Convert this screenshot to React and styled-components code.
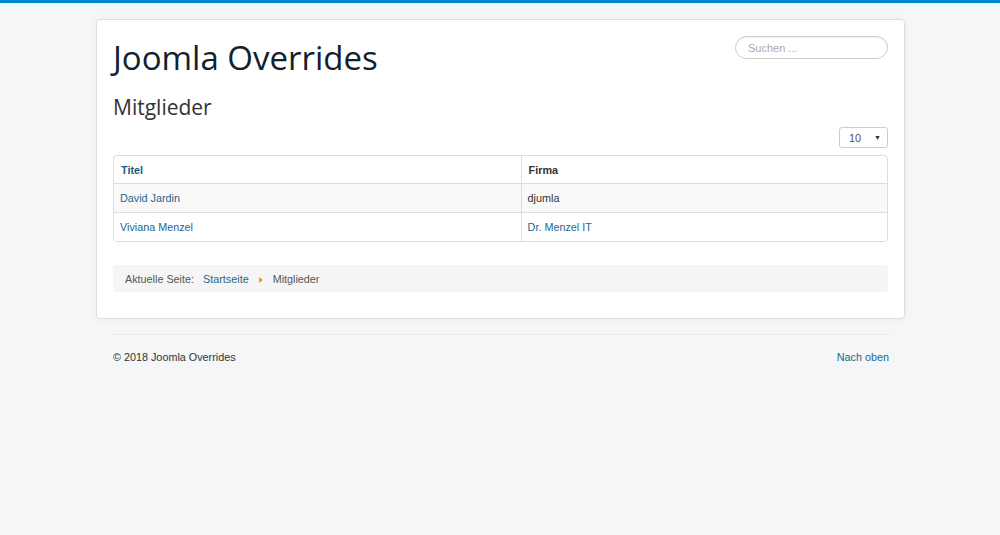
import React from 'react'
import styled, { createGlobalStyle } from 'styled-components'

const GlobalStyle = createGlobalStyle`
  html, body {
    margin: 0;
    padding: 0;
  }
  body {
    background: #f4f6f7;
    border-top: 3px solid #0088cc;
    font-family: "Liberation Sans", Arial, sans-serif;
    font-size: 10.8px;
    line-height: 18px;
    color: #333333;
    min-height: 532px;
  }
  a {
    color: #25668c;
    text-decoration: none;
  }
`

const Body = styled.div`
  padding: 16px 95px 0 96px;
`

const Card = styled.div`
  background: #ffffff;
  border: 1px solid #dddddd;
  border-radius: 4px;
  box-shadow: 0 0 6px rgba(0, 0, 0, 0.05);
  padding: 14px 16px 26px 16px;
`

const Header = styled.div`
  display: flex;
  justify-content: space-between;
  align-items: flex-start;
`

const Brand = styled.h1`
  margin: 2px 0 0 0;
  font-family: "Open Sans", sans-serif;
  font-weight: 400;
  font-size: 33px;
  line-height: 44px;
  color: #10222e;
`

const Search = styled.input`
  width: 153px;
  height: 23px;
  box-sizing: border-box;
  margin-top: 2px;
  border: 1px solid #cccccc;
  border-radius: 12px;
  padding: 0 12px;
  font-family: "Liberation Sans", Arial, sans-serif;
  font-size: 11px;
  color: #555;
  box-shadow: inset 0 1px 1px rgba(0, 0, 0, 0.06);
  outline: none;

  &::placeholder {
    color: #aaaaaa;
  }
`

const PageTitle = styled.h2`
  margin: 13px 0 0 0;
  font-family: "Open Sans", sans-serif;
  font-weight: 500;
  font-size: 21px;
  line-height: 28px;
  color: #333333;
`

const Tools = styled.div`
  display: flex;
  justify-content: flex-end;
  margin-top: 6px;
`

const Limit = styled.div`
  width: 49px;
  height: 21px;
  box-sizing: border-box;
  border: 1px solid #cccccc;
  border-radius: 3px;
  display: flex;
  align-items: center;
  justify-content: space-between;
  padding: 0 6px 0 9px;
  font-size: 11px;
  color: #555;
`

const Caret = styled.span`
  font-size: 7px;
  color: #333;
`

const Table = styled.table`
  width: 100%;
  margin-top: 7px;
  border-collapse: separate;
  border-spacing: 0;
  border: 1px solid #dddddd;
  border-radius: 4px;
  overflow: hidden;
`

const Th = styled.th`
  text-align: left;
  font-weight: 700;
  padding: 5px 7px 4px;
  height: 18px;
  border-left: ${p => (p.$first ? 'none' : '1px solid #dddddd')};
  color: ${p => (p.$link ? '#1e5a80' : '#333333')};
  width: ${p => (p.$first ? '52.6%' : 'auto')};
`

const Row = styled.tr`
  background: ${p => (p.$odd ? '#f9f9f9' : '#ffffff')};
`

const Td = styled.td`
  padding: 5px 6px 5px 6px;
  height: 18px;
  border-top: 1px solid #dddddd;
  border-left: ${p => (p.$first ? 'none' : '1px solid #dddddd')};
`

const Breadcrumbs = styled.div`
  margin-top: 23px;
  background: #f5f5f5;
  border-radius: 4px;
  height: 27px;
  display: flex;
  align-items: center;
  padding: 0 12px;
  color: #555555;
`

const Active = styled.span`
  margin-right: 9px;
`

const Divider = styled.span`
  display: inline-block;
  width: 0;
  height: 0;
  border-top: 3px solid transparent;
  border-bottom: 3px solid transparent;
  border-left: 4px solid #f39a1e;
  margin: 2px 10px 0 10px;
`

const Footer = styled.div`
  margin: 15px 16px 0 17px;
  border-top: 1px solid #e8eaeb;
  padding-top: 13px;
  display: flex;
  justify-content: space-between;
  color: #333333;
`

export default function App() {
  return (
    <>
      <GlobalStyle />
      <Body>
        <Card>
          <Header>
            <Brand>Joomla Overrides</Brand>
            <Search placeholder="Suchen ..." />
          </Header>
          <PageTitle>Mitglieder</PageTitle>
          <Tools>
            <Limit>
              10<Caret>▼</Caret>
            </Limit>
          </Tools>
          <Table>
            <thead>
              <tr>
                <Th $first $link>Titel</Th>
                <Th>Firma</Th>
              </tr>
            </thead>
            <tbody>
              <Row $odd>
                <Td $first><a href="#">David Jardin</a></Td>
                <Td>djumla</Td>
              </Row>
              <Row>
                <Td $first><a href="#">Viviana Menzel</a></Td>
                <Td><a href="#">Dr. Menzel IT</a></Td>
              </Row>
            </tbody>
          </Table>
          <Breadcrumbs>
            <Active>Aktuelle Seite:</Active>
            <a href="#">Startseite</a>
            <Divider />
            <span>Mitglieder</span>
          </Breadcrumbs>
        </Card>
        <Footer>
          <span>© 2018 Joomla Overrides</span>
          <a href="#">Nach oben</a>
        </Footer>
      </Body>
    </>
  )
}
